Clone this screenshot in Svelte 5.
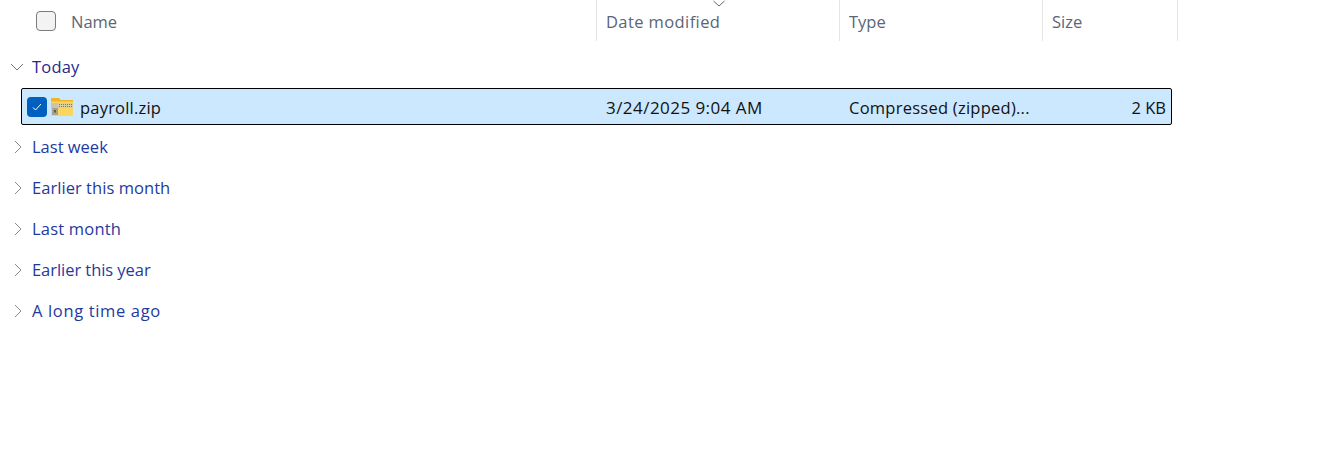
<script>
  const groups = [
    { label: "Last week", spacing: 0 },
    { label: "Earlier this month", spacing: 0.05 },
    { label: "Last month", spacing: 0.2 },
    { label: "Earlier this year", spacing: -0.05 },
    { label: "A long time ago", spacing: 0.65 },
  ];
</script>

<div class="view">
  <div class="header">
    <div class="col name">
      <span class="check-empty"></span>
      <span class="label">Name</span>
    </div>
    <div class="col date">
      <svg class="sort" width="14" height="7" viewBox="0 0 14 7"><path d="M1.5 1 L7 6 L12.5 1" fill="none" stroke="#6b6b6b" stroke-width="1"/></svg>
      <span class="label wide">Date modified</span>
    </div>
    <div class="col type"><span class="label">Type</span></div>
    <div class="col size"><span class="label">Size</span></div>
  </div>

  <div class="group today">
    <svg width="14" height="14" viewBox="0 0 14 14"><path d="M1 4 L7 10 L13 4" fill="none" stroke="#777" stroke-width="1"/></svg>
    <span>Today</span>
  </div>

  <div class="row">
    <span class="check-on">
      <svg width="12" height="12" viewBox="0 0 12 12"><path d="M2 6.500 L4.500 9 L10 3" fill="none" stroke="#fff" stroke-width="1"/></svg>
    </span>
    <svg class="zip" width="24" height="20" viewBox="0 0 24 20">
      <path d="M1 1.500 Q1 1 1.500 1 H9 L11 3 H23 V18.500 Q23 19 22.500 19 H1.500 Q1 19 1 18.500 Z" fill="#fbd55f"/>
      <path d="M1 1.500 Q1 1 1.500 1 H9 L10.500 3 H23 V4.500 H1 Z" fill="#f0b429"/>
      <rect x="1" y="6" width="22" height="5" fill="#d9cfa4"/>
      <path d="M9 7.500 h13 M9 9.500 h13" stroke="#7d7762" stroke-width="1" stroke-dasharray="1 1"/>
      <rect x="1" y="6" width="7" height="5" fill="#c9c4ae"/>
      <rect x="2" y="11" width="6" height="7" fill="#a8a28c"/>
      <rect x="4" y="13" width="2" height="2.500" fill="#5f5b4c"/>
    </svg>
    <span class="cell cell-name">payroll.zip</span>
    <span class="cell cell-date">3/24/2025 9:04 AM</span>
    <span class="cell cell-type">Compressed (zipped)...</span>
    <span class="cell cell-size">2 KB</span>
  </div>

  <div class="rest">
    {#each groups as g}
      <div class="group">
        <svg width="14" height="14" viewBox="0 0 14 14"><path d="M4 1 L10 7 L4 13" fill="none" stroke="#8a8a8a" stroke-width="1"/></svg>
        <span style="letter-spacing: {g.spacing}px">{g.label}</span>
      </div>
    {/each}
  </div>
</div>

<style>
  :global(body) {
    background: #fff;
  }

  .view {
    width: 1330px;
    height: 456px;
    overflow: hidden;
    font-family: "Open Sans", "Noto Sans", sans-serif;
    font-size: 16.5px;
  }

  .header {
    display: flex;
    height: 41px;
    color: #5a6675;
  }

  .col {
    display: flex;
    align-items: center;
    box-sizing: border-box;
    padding: 0 0 0 9px;
    border-right: 1px solid #e5e5e5;
    position: relative;
  }

  .label {
    padding-top: 1px;
  }

  .wide {
    letter-spacing: 0.4px;
  }

  .name {
    width: 597px;
    padding-left: 36px;
    gap: 15px;
  }

  .date { width: 243px; }
  .type { width: 203px; }
  .size { width: 135px; }

  .check-empty {
    width: 20px;
    height: 20px;
    box-sizing: border-box;
    background: #f3f3f3;
    border: 1px solid #7c7c7c;
    border-radius: 4px;
  }

  .sort {
    position: absolute;
    left: 115px;
    top: 0;
  }

  .group {
    display: flex;
    align-items: center;
    box-sizing: border-box;
    height: 41px;
    padding-left: 11px;
    padding-bottom: 2px;
    gap: 7px;
    color: #1f3a9e;
  }

  .today {
    margin-top: 6px;
    padding-left: 10px;
    gap: 8px;
    color: #2b2a8c;
    letter-spacing: 0.2px;
  }

  .rest {
    margin-top: 2px;
  }

  .row {
    display: flex;
    align-items: center;
    box-sizing: border-box;
    width: 1151px;
    height: 37px;
    margin-left: 21px;
    background: #cce8ff;
    border: 1px solid #000;
    border-radius: 2px;
    color: #111;
  }

  .check-on {
    display: flex;
    align-items: center;
    justify-content: center;
    width: 20px;
    height: 20px;
    margin-left: 5px;
    background: #0060c0;
    border-radius: 4px;
  }

  .zip {
    margin-left: 3px;
    margin-top: 1px;
  }

  .cell {
    white-space: nowrap;
    padding-top: 2px;
  }

  .cell-name {
    width: 526px;
    margin-left: 6px;
    letter-spacing: 0.2px;
  }

  .cell-date {
    width: 243px;
    font-size: 17px;
    letter-spacing: 0.45px;
  }

  .cell-type {
    width: 222px;
    letter-spacing: 0.25px;
  }

  .cell-size {
    width: 95px;
    text-align: right;
  }
</style>
